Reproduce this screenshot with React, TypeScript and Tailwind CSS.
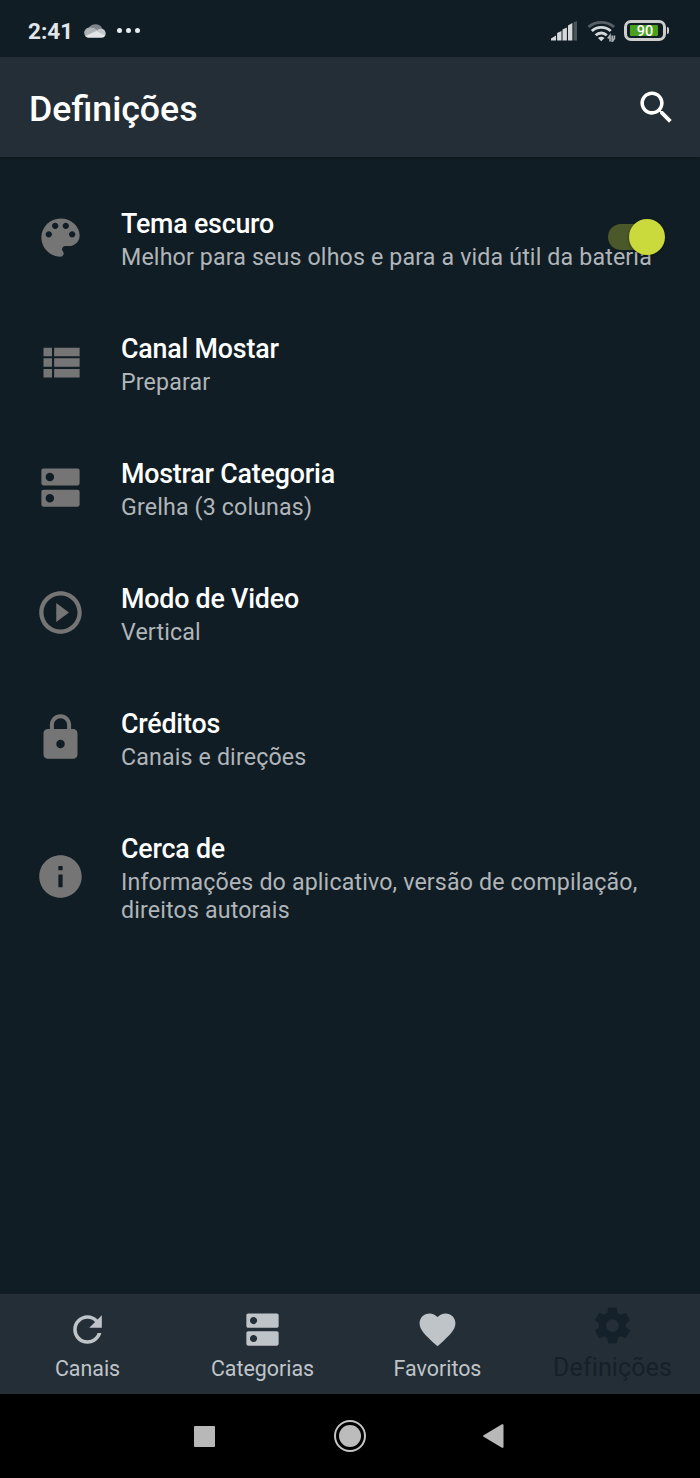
import React, { useState } from 'react';

interface IconProps {
  path: string;
  className?: string;
}

const Icon: React.FC<IconProps> = ({ path, className }) => (
  <svg viewBox="0 0 24 24" fill="currentColor" className={className}>
    <path d={path} />
  </svg>
);

const ICONS = {
  palette: 'M12 3c-4.97 0-9 4.03-9 9s4.03 9 9 9c.83 0 1.5-.67 1.5-1.5 0-.39-.15-.74-.39-1.01-.23-.26-.38-.61-.38-.99 0-.83.67-1.5 1.5-1.5H16c2.76 0 5-2.24 5-5 0-4.42-4.03-8-9-8zm-5.500 9c-.83 0-1.500-.67-1.500-1.500S5.670 9 6.500 9 8 9.670 8 10.500 7.330 12 6.500 12zm3-4C8.670 8 8 7.330 8 6.500S8.670 5 9.500 5s1.500.67 1.500 1.500S10.330 8 9.500 8zm5 0c-.83 0-1.500-.67-1.500-1.500S13.670 5 14.500 5s1.500.67 1.500 1.500S15.330 8 14.500 8zm3 4c-.83 0-1.500-.67-1.500-1.500S16.670 9 17.500 9s1.500.67 1.500 1.500-.67 1.500-1.500 1.500z',
  list: 'M4 14h4v-4H4v4zm0 5h4v-4H4v4zM4 9h4V5H4v4zm5 5h12v-4H9v4zm0 5h12v-4H9v4zM9 5v4h12V5H9z',
  dns: 'M20 13H4c-.55 0-1 .45-1 1v6c0 .55.45 1 1 1h16c.55 0 1-.45 1-1v-6c0-.55-.45-1-1-1zM7 19c-1.100 0-2-.9-2-2s.9-2 2-2 2 .9 2 2-.9 2-2 2zM20 3H4c-.55 0-1 .45-1 1v6c0 .55.45 1 1 1h16c.55 0 1-.45 1-1V4c0-.55-.45-1-1-1zM7 9c-1.100 0-2-.9-2-2s.9-2 2-2 2 .9 2 2-.9 2-2 2z',
  play: 'M10 16.500l6-4.500-6-4.500v9zM12 2C6.480 2 2 6.480 2 12s4.480 10 10 10 10-4.480 10-10S17.520 2 12 2zm0 18c-4.410 0-8-3.590-8-8s3.590-8 8-8 8 3.590 8 8-3.590 8-8 8z',
  lock: 'M18 8h-1V6c0-2.760-2.240-5-5-5S7 3.240 7 6v2H6c-1.100 0-2 .9-2 2v10c0 1.100.9 2 2 2h12c1.100 0 2-.9 2-2V10c0-1.100-.9-2-2-2zm-6 9c-1.100 0-2-.9-2-2s.9-2 2-2 2 .9 2 2-.9 2-2 2zm3.100-9H8.900V6c0-1.710 1.390-3.100 3.100-3.100 1.710 0 3.100 1.390 3.100 3.100v2z',
  info: 'M12 2C6.480 2 2 6.480 2 12s4.480 10 10 10 10-4.480 10-10S17.520 2 12 2zm1 15h-2v-6h2v6zm0-8h-2V7h2v2z',
  refresh: 'M17.650 6.350C16.200 4.900 14.210 4 12 4c-4.420 0-7.990 3.580-7.990 8s3.570 8 7.990 8c3.730 0 6.840-2.550 7.730-6h-2.080c-.82 2.330-3.040 4-5.650 4-3.310 0-6-2.690-6-6s2.690-6 6-6c1.660 0 3.140.69 4.220 1.780L13 11h7V4l-2.350 2.350z',
  heart: 'M12 21.350l-1.450-1.320C5.400 15.360 2 12.280 2 8.500 2 5.420 4.420 3 7.500 3c1.740 0 3.410.81 4.500 2.090C13.090 3.810 14.760 3 16.500 3 19.580 3 22 5.420 22 8.500c0 3.780-3.400 6.860-8.550 11.540L12 21.350z',
  gear: 'M19.430 12.980c.04-.32.07-.64.07-.98s-.03-.66-.07-.98l2.110-1.650c.19-.15.24-.42.12-.64l-2-3.460c-.12-.22-.39-.3-.61-.22l-2.490 1c-.52-.4-1.080-.73-1.690-.98l-.38-2.650C14.460 2.180 14.250 2 14 2h-4c-.25 0-.46.18-.49.42l-.38 2.650c-.61.25-1.170.59-1.690.98l-2.490-1c-.23-.09-.49 0-.61.22l-2 3.460c-.13.22-.07.49.12.64l2.110 1.650c-.04.32-.07.65-.07.98s.03.66.07.98l-2.110 1.650c-.19.15-.24.42-.12.64l2 3.460c.12.22.39.3.61.22l2.490-1c.52.4 1.080.73 1.690.98l.38 2.650c.03.24.24.42.49.42h4c.25 0 .46-.18.49-.42l.38-2.650c.61-.25 1.170-.59 1.690-.98l2.490 1c.23.09.49 0 .61-.22l2-3.460c.12-.22.07-.49-.12-.64l-2.110-1.650zM12 15.500c-1.930 0-3.500-1.570-3.500-3.500s1.570-3.500 3.500-3.500 3.500 1.570 3.500 3.500-1.570 3.500-3.500 3.500z',
  search: 'M15.500 14h-.79l-.28-.27C15.410 12.590 16 11.110 16 9.500 16 5.910 13.090 3 9.500 3S3 5.910 3 9.500 5.910 16 9.500 16c1.610 0 3.090-.59 4.230-1.570l.27.28v.79l5 4.990L20.490 19l-4.990-5zm-6 0C7.010 14 5 11.990 5 9.500S7.010 5 9.500 5 14 7.010 14 9.500 11.990 14 9.500 14z',
};

const SETTINGS = [
  { icon: ICONS.palette, title: 'Tema escuro', text: 'Melhor para seus olhos e para a vida útil da bateria', toggle: true },
  { icon: ICONS.list, title: 'Canal Mostar', text: 'Preparar' },
  { icon: ICONS.dns, title: 'Mostrar Categoria', text: 'Grelha (3 colunas)' },
  { icon: ICONS.play, title: 'Modo de Video', text: 'Vertical' },
  { icon: ICONS.lock, title: 'Créditos', text: 'Canais e direções' },
  { icon: ICONS.info, title: 'Cerca de', text: 'Informações do aplicativo, versão de compilação, direitos autorais' },
];

const TABS = [
  { icon: ICONS.refresh, label: 'Canais' },
  { icon: ICONS.dns, label: 'Categorias' },
  { icon: ICONS.heart, label: 'Favoritos' },
  { icon: ICONS.gear, label: 'Definições' },
];

const StatusBar: React.FC = () => (
  <div className="h-[57px] flex items-center justify-between pl-[28px] pr-[31px] pt-[4px] text-[#e2e6ea]">
    <div className="flex items-center">
      <span className="w-[47px] text-[22.500px] font-bold whitespace-nowrap pt-[2px]">2:41</span>
      <svg viewBox="0 0 22 14" className="w-[22px] h-[14px] ml-[9px]">
        <path d="M4.500 4C6 1.500 8.500.2 11.500.2c3.300 0 6 1.800 6.900 4.800L13 8 4.500 4z" fill="#7d8589" />
        <path d="M5.500 3.500C2.500 3.700.2 6 .2 8.800c0 1.500.6 2.800 1.600 3.700L14 6.500C11.500 4.300 8.500 3.300 5.500 3.500z" fill="#adb2b4" />
        <path d="M12.500 7C14.500 4.500 19 4 20.700 6.500c1.300 1.900 1.300 4 .3 5.500L12.500 7z" fill="#c5c9cb" />
        <path d="M1.300 12L12.500 6.800l8.700 4.800c-.7 1.500-2 2.200-3.700 2.200H5c-1.600 0-2.900-.7-3.700-1.800z" fill="#e3e5e6" />
      </svg>
      <div className="flex gap-[4px] ml-[11px]">
        <span className="size-[5px] rounded-full bg-[#e8ecee]" />
        <span className="size-[5px] rounded-full bg-[#e8ecee]" />
        <span className="size-[5px] rounded-full bg-[#e8ecee]" />
      </div>
    </div>
    <div className="flex items-center">
      <svg viewBox="0 0 26 20" className="w-[26px] h-[20px]">
        <path d="M0 19.500v-2l5-3v5zM6.100 12l4.400-2v9.500H6.100zM11.500 8.500l4.400-2v13h-4.400zM17 4.500l4.400-2.500v17.500H17z" fill="#d5d8da" />
        <path d="M22.500 1.200L26 0v19.500h-3.500z" fill="#4b555a" />
      </svg>
      <svg viewBox="0 0 30 22" fill="none" className="w-[30px] h-[22px] ml-[10px]">
        <path d="M1.500 7c7-6.300 18.500-6.300 25.500 0" stroke="#566065" strokeWidth="2.800" />
        <path d="M4.800 11c5.300-4.800 13.600-4.800 18.900 0M8.700 15.300c3.200-3 7.900-3 11.100 0" stroke="#d5d8da" strokeWidth="2.900" />
        <path d="M11 18c2-1.800 4.500-1.800 6.500 0l-3.250 3.300z" fill="#d5d8da" />
        <path d="M20.800 18.500l2.200-3v6M27.400 15.500v3l-2.200 3v-6" stroke="#aab0b3" strokeWidth="1.700" />
      </svg>
      <div className="ml-[7px] w-[42px] h-[21px] rounded-[7px] border-[3px] border-[#cdcdcd] py-[2px] pl-[3px] pr-[5px] flex">
        <div className="flex-1 bg-[#48a01c] rounded-[1px] flex items-center justify-center">
          <span className="pt-[3px] pl-[2px] text-[14.500px] leading-none font-medium text-white">90</span>
        </div>
      </div>
      <div className="w-[2px] h-[7px] ml-px rounded-r-[2px] bg-[#cdcdcd]" />
    </div>
  </div>
);

const App: React.FC = () => {
  const [dark, setDark] = useState(true);
  const [active, setActive] = useState(3);

  return (
    <div className="w-[700px] h-[1478px] flex flex-col overflow-hidden bg-[#111d24] font-['Roboto',sans-serif]">
      <StatusBar />

      <header className="h-[100px] shrink-0 flex items-center justify-between pl-[29px] pr-[22px] bg-[#242e36] shadow-[0_1px_2px_rgba(0,0,0,0.25)]">
        <h1 className="text-[35.700px] font-medium text-white pt-[5px]">Definições</h1>
        <button aria-label="Pesquisar">
          <Icon path={ICONS.search} className="size-[43px] text-white" />
        </button>
      </header>

      <main className="flex-1 pt-[18px]">
        {SETTINGS.map((item) => (
          <div key={item.title} className="relative flex items-center pl-[35px] pr-[36px] py-[30.500px]">
            <Icon path={item.icon} className="size-[51px] shrink-0 text-[#757575]" />
            <div className="mt-[2px] -mb-[2px] ml-[35px] flex-1">
              <h2 className="text-[26.800px] leading-[32px] tracking-[-0.2px] font-medium text-white">{item.title}</h2>
              <p className="mt-[4.500px] text-[23.200px] leading-[27.500px] tracking-[0.15px] text-[#b0b5b9]">{item.text}</p>
            </div>
            {item.toggle && (
              <button onClick={() => setDark(!dark)} className="absolute right-[35px] top-[44px] w-[57px] h-[36px] flex items-center justify-end">
                <span className="w-[55px] h-[26px] mr-[2px] rounded-full bg-[#4b5829]" />
                <span className={`absolute size-[36px] rounded-full bg-[#cad93c] shadow-[0_1px_3px_rgba(0,0,0,0.4)] ${dark ? 'right-0' : 'left-0'}`} />
              </button>
            )}
          </div>
        ))}
      </main>

      <nav className="h-[100px] shrink-0 flex bg-[#242e36]">
        {TABS.map((tab, i) => (
          <button
            key={tab.label}
            onClick={() => setActive(i)}
            className={`flex-1 flex flex-col items-center ${active === i ? 'pt-[10px] text-[#14212a]' : 'pt-[14px] text-[#bfc4c9]'}`}
          >
            <Icon path={tab.icon} className="size-[43px]" />
            <span className={active === i ? 'mt-[6px] text-[25px] leading-[30px] tracking-[0.1px]' : 'mt-[5px] text-[21.400px] leading-[26px]'}>{tab.label}</span>
          </button>
        ))}
      </nav>

      <div className="h-[84px] shrink-0 flex items-center justify-center bg-black text-[#b8b8b8]">
        <div className="size-[21px] mr-[119px] rounded-[1px] bg-[#b8b8b8]" />
        <div className="size-[32px] rounded-full border-[2px] border-[#c4c4c4] flex items-center justify-center">
          <div className="size-[22px] rounded-full bg-[#bcbcbc]" />
        </div>
        <svg viewBox="0 0 21 24" className="w-[21px] h-[24px] ml-[117px] mr-[2px]" fill="currentColor">
          <path d="M.6 11.200L19 .3c.7-.4 1.500 0 1.500.8v21.800c0 .8-.8 1.200-1.500.8L.6 12.800c-.6-.4-.6-1.200 0-1.600z" />
        </svg>
      </div>
    </div>
  );
};

export default App;
